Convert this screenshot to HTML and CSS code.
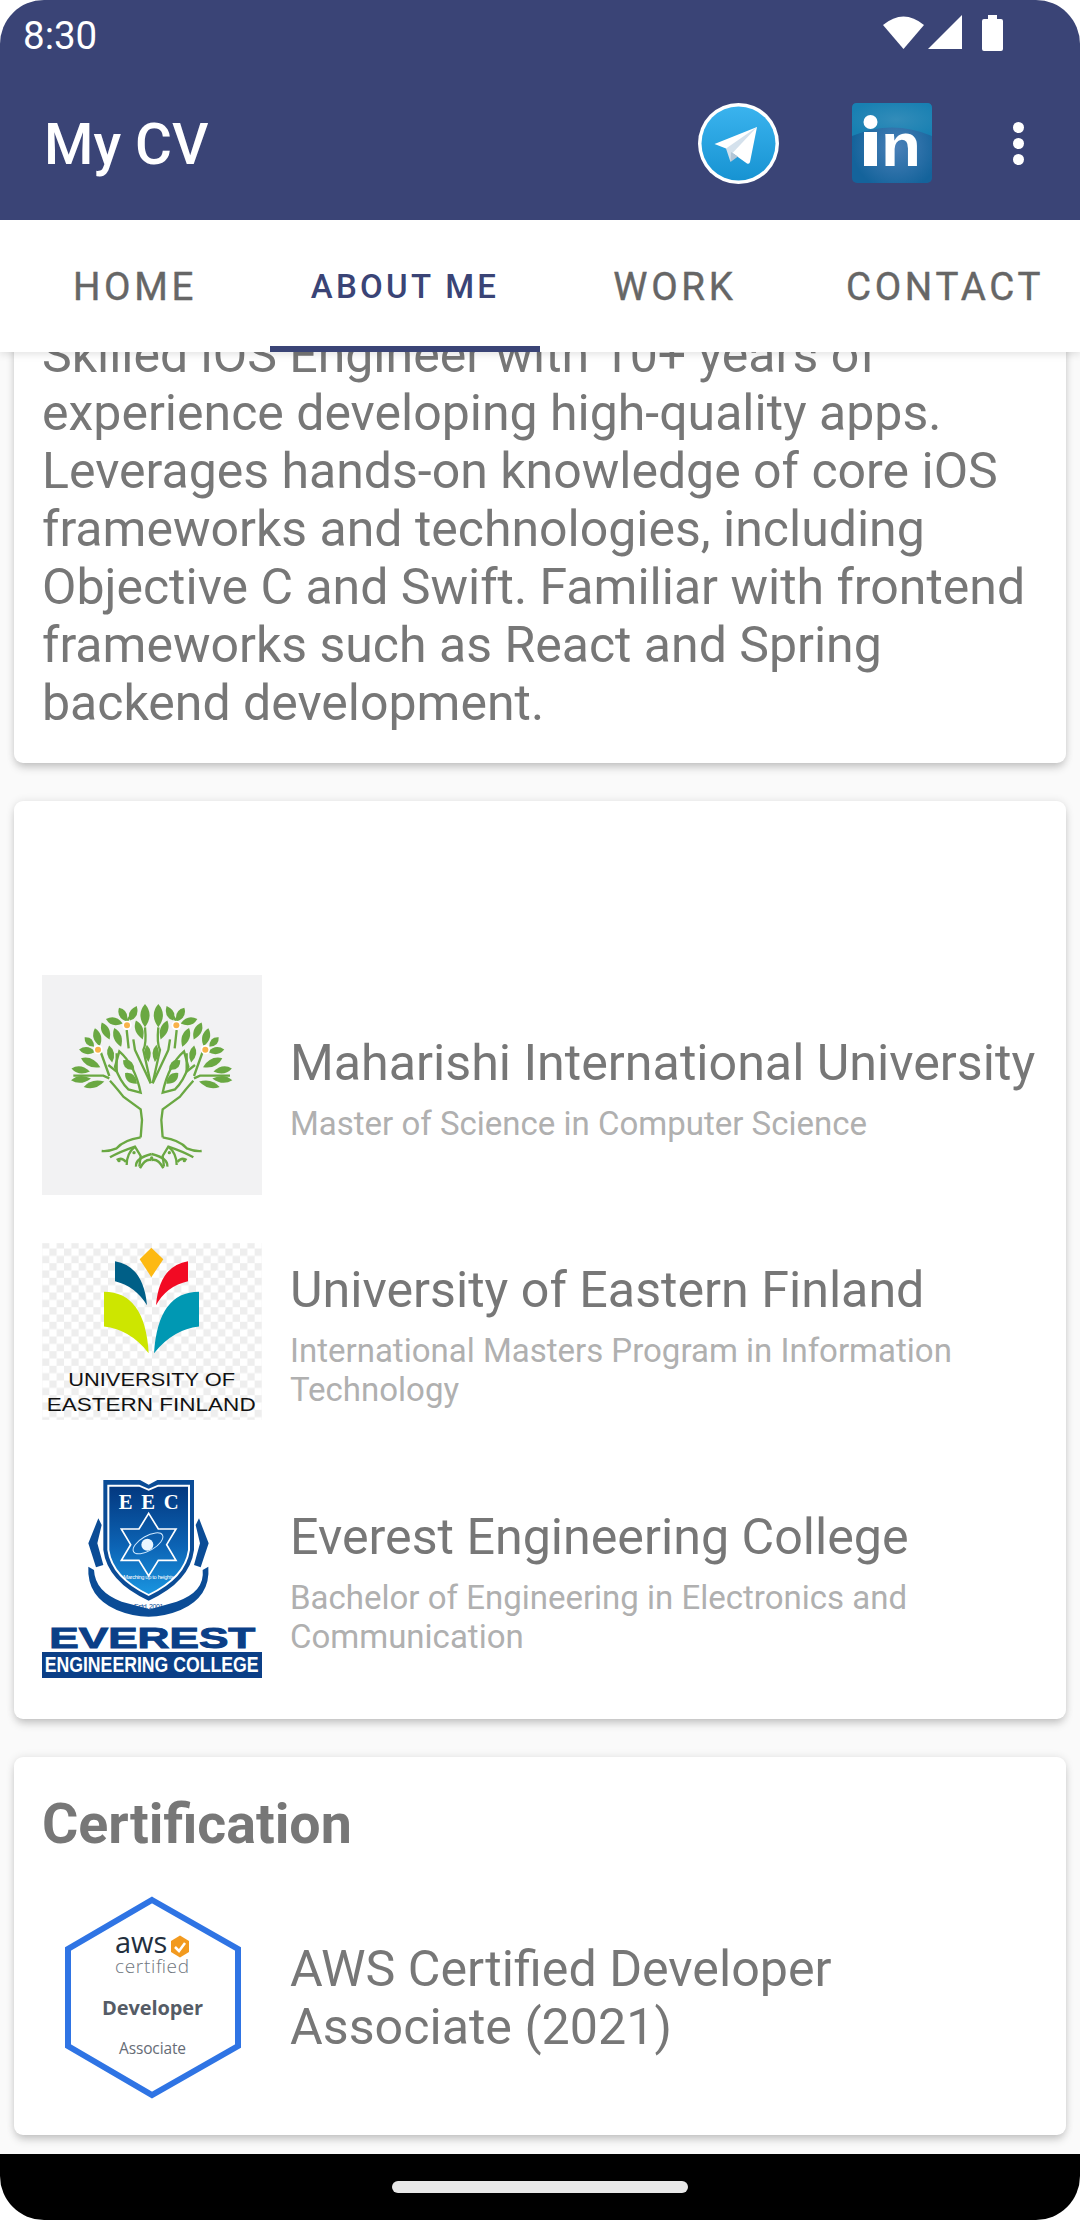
FILE: index.html
```html
<!DOCTYPE html>
<html lang="en">
<head>
<meta charset="utf-8">
<title>My CV</title>
<link rel="stylesheet" href="styles.css">
</head>
<body>
<div class="screen">
  <header class="appbar">
    <div class="status">
      <span class="clock">8:30</span>
      <div class="status-icons">
        <svg class="ic-wifi" viewBox="0 0 41 34"><path d="M0 10 Q20.5 -7 41 10 L20.5 34Z" fill="#fff"/></svg>
        <svg class="ic-signal" viewBox="0 0 34 34"><path d="M34 0V34H0Z" fill="#fff"/></svg>
        <svg class="ic-battery" viewBox="0 0 21 36"><path d="M6 0H15V4H19Q21 4 21 6V34Q21 36 19 36H2Q0 36 0 34V6Q0 4 2 4H6Z" fill="#fff"/></svg>
      </div>
    </div>
    <div class="toolbar">
      <h1 class="app-title">My CV</h1>
      <svg class="ic-telegram" viewBox="0 0 81 81">
        <defs><linearGradient id="tg" x1="0" y1="0" x2="0" y2="1"><stop offset="0" stop-color="#3ab3ee"/><stop offset="1" stop-color="#1793d2"/></linearGradient></defs>
        <circle cx="40.5" cy="40.5" r="40.5" fill="#fff"/>
        <circle cx="40.5" cy="40.5" r="37" fill="url(#tg)"/>
        <path d="M59 24 L16.5 41 L28 45.5 L49 60.5 Q51.5 61.5 52 59Z" fill="#fff"/>
        <path d="M59 24 L28 45.5 L32.5 59 L35 49.5Z" fill="#d4e1ec"/>
        <path d="M33 49 L32.5 59 L40 53.5Z" fill="#b4c6d6"/>
      </svg>
      <svg class="ic-linkedin" viewBox="0 0 80 80">
        <defs>
          <radialGradient id="li" cx=".55" cy=".55" r=".55"><stop offset="0" stop-color="#4a80b8"/><stop offset="1" stop-color="#14639b"/></radialGradient>
          <radialGradient id="li2" cx=".55" cy=".5" r=".6"><stop offset="0" stop-color="#338cb9"/><stop offset="1" stop-color="#1880b2"/></radialGradient>
        </defs>
        <rect width="80" height="80" rx="5" fill="url(#li)"/>
        <path d="M0 5Q0 0 5 0H75Q80 0 80 5V33Q40 16 0 33Z" fill="url(#li2)"/>
        <circle cx="18.5" cy="19" r="7" fill="#fff"/>
        <rect x="12" y="29" width="13" height="34" fill="#fff"/>
        <text class="li-n" x="29" y="63" textLength="40" lengthAdjust="spacingAndGlyphs">n</text>
      </svg>
      <div class="overflow"><i></i><i></i><i></i></div>
    </div>
  </header>

  <nav class="tabs">
    <div class="tab">HOME</div>
    <div class="tab tab-active">ABOUT ME</div>
    <div class="tab">WORK</div>
    <div class="tab">CONTACT</div>
  </nav>

  <main class="content">
    <section class="card card-about">
      <p class="about-text">Skilled iOS Engineer with 10+ years of experience developing high-quality apps. Leverages hands-on knowledge of core iOS frameworks and technologies, including Objective C and Swift. Familiar with frontend frameworks such as React and Spring backend development.</p>
    </section>

    <section class="card card-edu">
      <div class="row row-miu">
        <svg class="logo" viewBox="66 75 660 660">
          <defs>
            <path id="lf" d="M-1 0Q-.1 -1.15 1 0Q-.1 1.15 -1 0Z"/>
            <g id="half">
              <g fill="#6aa842">
                <use href="#lf" transform="translate(375 197) rotate(90) scale(35 24)"/>
                <use href="#lf" transform="translate(340 190) rotate(-65) scale(24 20)"/>
                <use href="#lf" transform="translate(309 194) rotate(60) scale(24 20)"/>
                <use href="#lf" transform="translate(283 214) rotate(15) scale(26 20)"/>
                <use href="#lf" transform="translate(257 243) rotate(65) scale(28 20)"/>
                <use href="#lf" transform="translate(358 240) rotate(70) scale(30 20)"/>
                <use href="#lf" transform="translate(293 262) rotate(70) scale(30 20)"/>
                <use href="#lf" transform="translate(232 262) rotate(75) scale(28 20)"/>
                <use href="#lf" transform="translate(208 276) rotate(45) scale(20 18)"/>
                <use href="#lf" transform="translate(202 302) rotate(8) scale(25 18)"/>
                <use href="#lf" transform="translate(272 312) rotate(80) scale(26 18)"/>
                <use href="#lf" transform="translate(212 338) rotate(25) scale(32 20)"/>
                <use href="#lf" transform="translate(182 360) rotate(10) scale(28 18)"/>
                <use href="#lf" transform="translate(183 388) rotate(-5) scale(30 18)"/>
                <use href="#lf" transform="translate(222 403) rotate(-15) scale(32 18)"/>
                <use href="#lf" transform="translate(383 310) rotate(85) scale(26 16)"/>
                <use href="#lf" transform="translate(326 345) rotate(40) scale(22 22)"/>
                <use href="#lf" transform="translate(333 385) rotate(42) scale(24 22)"/>
              </g>
              <g fill="none" stroke="#6aa842" stroke-width="7">
                <path d="M298 304Q345 345 362 428L325 418Q300 395 285 350Z"/>
                <path d="M160 377H250L268 385"/>
                <path d="M270 392Q295 420 310 440L362 478L366 510L362 562"/>
                <path d="M362 562Q310 570 290 595Q265 605 245 603"/>
                <path d="M270 622Q300 605 345 590L362 618L358 650"/>
                <path d="M320 645Q320 610 345 590M348 650Q345 625 395 612"/>
                <path d="M290 630Q305 620 318 636"/>
                <path d="M360 655Q375 625 395 630"/>
                <path d="M330 200L320 215M320 240L326 295M375 232Q380 280 370 300L392 400"/>
                <path d="M345 300L340 268M345 300L392 400M232 300H240L268 378M265 345L290 365V310"/>
              </g>
              <circle cx="321" cy="226" r="14" fill="#fff"/><circle cx="321" cy="226" r="9" fill="#f9b24a"/>
              <circle cx="234" cy="299" r="14" fill="#fff"/><circle cx="234" cy="299" r="9" fill="#f9b24a"/>
              <circle cx="342" cy="608" r="5" fill="#6aa842"/>
              <circle cx="297" cy="632" r="5" fill="#6aa842"/>
            </g>
          </defs>
          <rect x="66" y="75" width="660" height="660" fill="#f2f2f3"/>
          <use href="#half"/>
          <use href="#half" transform="translate(790 0) scale(-1 1)"/>
          <circle cx="395" cy="624" r="5" fill="#6aa842"/>
        </svg>
        <div class="row-text">
          <h3 class="row-title">Maharishi International University</h3>
          <p class="row-sub">Master of Science in Computer Science</p>
        </div>
      </div>

      <div class="row row-uef">
        <svg class="logo logo-uef" viewBox="66 72 660 530">
          <defs>
            <pattern id="chk" width="44" height="44" patternUnits="userSpaceOnUse">
              <rect width="22" height="22" fill="#eeeeee"/><rect x="22" y="22" width="22" height="22" fill="#eeeeee"/>
            </pattern>
          </defs>
          <rect x="66" y="72" width="660" height="530" fill="#fff"/>
          <rect x="66" y="72" width="660" height="530" fill="url(#chk)"/>
          <path d="M394 86L430 120L394 174L359 120Z" fill="#fdb913"/>
          <path d="M285 126Q370 140 381 258Q345 200 285 186Z" fill="#005f87"/>
          <path d="M504 126Q418 140 408 258Q440 200 504 186Z" fill="#f20a23"/>
          <path d="M252 218Q375 218 386 402Q330 330 252 322Z" fill="#cde600"/>
          <path d="M537 218Q414 218 402 402Q460 330 537 322Z" fill="#0098b3"/>
          <text class="uef-t" x="145" y="502" textLength="500" lengthAdjust="spacingAndGlyphs">UNIVERSITY OF</text>
          <text class="uef-t" x="80" y="577" textLength="627" lengthAdjust="spacingAndGlyphs">EASTERN FINLAND</text>
        </svg>
        <div class="row-text">
          <h3 class="row-title">University of Eastern Finland</h3>
          <p class="row-sub">International Masters Program in Information Technology</p>
        </div>
      </div>

      <div class="row row-eec">
        <svg class="logo logo-eec" viewBox="66 60 660 594">
          <defs>
            <linearGradient id="sh" x1="0" y1="0" x2="0" y2="1"><stop offset="0" stop-color="#03387f"/><stop offset=".55" stop-color="#0c63b4"/><stop offset="1" stop-color="#1a95e0"/></linearGradient>
          </defs>
          <path d="M250 60H360L386 74L412 60H522V270Q510 365 386 422Q262 365 250 270Z" fill="#0b4c96"/>
          <path d="M262 74H358L386 86L414 74H510V270Q498 355 386 408Q274 355 262 270Z" fill="#fff"/>
          <path d="M268 80H358L386 92L414 80H504V270Q492 350 386 402Q280 350 268 270Z" fill="url(#sh)"/>
          <text class="eec-eec" x="296" y="148" textLength="180">EEC</text>
          <path d="M386 160L415 207H468L440 254L468 301H415L386 348L357 301H304L332 254L304 207H357Z" fill="none" stroke="#fff" stroke-width="5"/>
          <circle cx="382" cy="254" r="18" fill="#eaf6ff"/>
          <ellipse cx="384" cy="250" rx="50" ry="22" transform="rotate(-30 384 250)" fill="none" stroke="#cfe9ff" stroke-width="3"/>
          <text class="eec-motto" x="310" y="357" textLength="152">Marching up to heights</text>
          <path d="M205 320Q200 410 290 450Q386 490 482 450Q572 410 565 320L548 330Q555 395 470 425L390 448L305 425Q225 395 222 330Z" fill="#0b4c96"/>
          <path d="M228 322L205 250L235 175L245 195L232 250L250 315Z M542 322L566 250L537 175L527 195L540 250L522 315Z" fill="#0b4c96"/>
          <text class="eec-estd" x="342" y="446" textLength="88">Estd. 2001</text>
          <text class="eec-name" x="88" y="564" textLength="618" lengthAdjust="spacingAndGlyphs">EVEREST</text>
          <rect x="66" y="576" width="660" height="78" fill="#0b3f87"/>
          <text class="eec-band" x="74" y="637" textLength="642" lengthAdjust="spacingAndGlyphs">ENGINEERING COLLEGE</text>
        </svg>
        <div class="row-text">
          <h3 class="row-title">Everest Engineering College</h3>
          <p class="row-sub">Bachelor of Engineering in Electronics and Communication</p>
        </div>
      </div>
    </section>

    <section class="card card-cert">
      <h2 class="cert-title">Certification</h2>
      <div class="row">
        <svg class="logo" viewBox="0 0 220 220">
          <path d="M110 13L196 62V159L110 208L26 159V62Z" fill="#fff" stroke="#2f74e4" stroke-width="6"/>
          <text class="aws-a" x="73" y="66">aws</text>
          <path d="M138 48.5L147 54V65L138 70.5L129 65V54Z" fill="#f29a1f"/>
          <path d="M133 60L137 64L143 56" fill="none" stroke="#fff" stroke-width="2.5"/>
          <text class="aws-c" x="73" y="86" textLength="74">certified</text>
          <text class="aws-d" x="60" y="128" textLength="101">Developer</text>
          <text class="aws-s" x="77" y="167" textLength="67">Associate</text>
        </svg>
        <div class="row-text row-text-cert">
          <h3 class="row-title">AWS Certified Developer Associate (2021)</h3>
        </div>
      </div>
    </section>
  </main>

  <footer class="navbar"><span class="pill"></span></footer>
</div>
</body>
</html>
```

FILE: styles.css
```css
* { box-sizing: border-box; }
html, body { margin: 0; padding: 0; background: #fff; }
body { width: 1080px; height: 2220px; font-family: Roboto, "Liberation Sans", sans-serif; }
h1, h2, h3, p { margin: 0; }

.screen {
  width: 1080px; height: 2220px; display: flex; flex-direction: column;
  background: #fafafa; border-radius: 44px; overflow: hidden;
}

.appbar { background: #3a4476; height: 220px; flex: none; color: #fff; position: relative; z-index: 3; }
.status { height: 66px; display: flex; align-items: center; justify-content: space-between; padding: 0 77px 0 23px; }
.clock { font-size: 38.5px; line-height: 66px; padding-top: 6px; }
.status-icons { display: flex; align-items: flex-start; height: 36px; }
.ic-wifi { width: 41px; height: 34px; }
.ic-signal { width: 34px; height: 34px; margin-left: 4px; }
.ic-battery { width: 21px; height: 36px; margin-left: 20px; }

.toolbar { height: 154px; display: flex; align-items: center; padding-left: 44px; }
.app-title { font-size: 56.5px; font-weight: 500; flex: 1; line-height: 1; padding-top: 4px; }
.ic-telegram { width: 81px; height: 81px; margin-right: 73px; }
.ic-linkedin { width: 80px; height: 80px; margin-right: 81px; }
.li-n { font: bold 62px "Liberation Sans", sans-serif; fill: #fff; }
.overflow { width: 11px; display: flex; flex-direction: column; gap: 5px; margin-right: 56px; }
.overflow i { display: block; width: 11px; height: 11px; border-radius: 50%; background: #fff; }

.tabs {
  height: 132px; flex: none; display: grid; grid-template-columns: repeat(4, 270px);
  background: #fff; box-shadow: 0 2px 8px rgba(0,0,0,.12); position: relative; z-index: 2;
}
.tab {
  display: flex; align-items: center; justify-content: center;
  font-size: 38.5px; font-weight: 400; letter-spacing: 3.7px; color: #666;
  -webkit-text-stroke: .4px #666;
  border-bottom: 6px solid transparent; white-space: nowrap; padding-top: 7px;
}
.tab-active { color: #3a4476; -webkit-text-stroke: 0; font-weight: 500; font-size: 33px; letter-spacing: 3.3px; border-bottom-color: #3a4476; }

.content { flex: 1; min-height: 0; overflow: hidden; padding: 0 14px; }

.card { background: #fff; border-radius: 9px; box-shadow: 0 6px 10px -2px rgba(0,0,0,.2), 0 0 8px rgba(0,0,0,.1); padding: 0 28px; margin-bottom: 38px; }
.card-about { margin-top: -26px; padding-bottom: 31px; border-radius: 0 0 9px 9px; }
.about-text { font-size: 50px; line-height: 58px; color: #777; }

.card-edu { padding-top: 174px; padding-bottom: 41px; }
.row { display: flex; align-items: center; gap: 28px; }
.logo { width: 220px; height: 220px; flex: none; display: block; }
.logo-uef { height: 177px; }
.logo-eec { height: 198px; }
.row-miu { margin-bottom: 48px; }
.row-uef { margin-bottom: 60px; }
.row-text { flex: 1; min-width: 0; padding-top: 6px; }
.row-text-cert { padding-top: 2px; }
.row-title { font-size: 50.2px; line-height: 58px; font-weight: 400; color: #777; }
.row-sub { font-size: 33px; line-height: 39px; color: #b0b0b0; margin-top: 12px; }

.card-cert { padding-top: 35px; padding-bottom: 28px; margin-bottom: 0; }
.cert-title { font-size: 55.5px; line-height: 65px; font-weight: 700; color: #777; margin-bottom: 30px; }

.uef-t { font: 56px "Liberation Sans", sans-serif; fill: #111; }
.eec-eec { font: bold 62px "Liberation Serif", serif; fill: #fff; }
.eec-motto { font: 17px "Liberation Sans", sans-serif; fill: #fff; }
.eec-estd { font: 21px "Liberation Sans", sans-serif; fill: #0b4c96; }
.eec-name { font: bold 90px "Liberation Sans", sans-serif; fill: #0b3f87; stroke: #0b3f87; stroke-width: 3px; }
.eec-band { font: bold 66px "Liberation Sans", sans-serif; fill: #fff; }
.aws-a { font: 500 29px "Open Sans", sans-serif; fill: #232f3e; }
.aws-c { font: 300 19px "Open Sans", sans-serif; fill: #6f7680; }
.aws-d { font: bold 20px "Open Sans", sans-serif; fill: #555c66; }
.aws-s { font: 15.5px "Open Sans", sans-serif; fill: #666c76; }

.navbar { height: 66px; flex: none; background: #000; display: flex; justify-content: center; padding-top: 27px; position: relative; z-index: 2; }
.pill { width: 296px; height: 12px; border-radius: 6px; background: #e8e8e8; }
```
